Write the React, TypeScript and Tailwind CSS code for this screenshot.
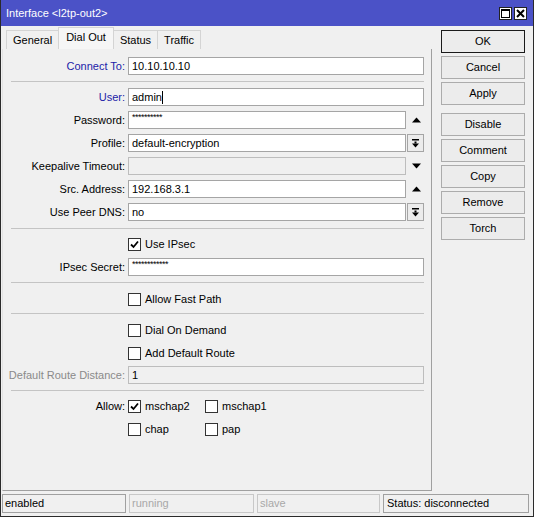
import type { ReactNode } from 'react'

const BLUE = 'text-[#1c1ca8]'

function UpArrow() {
  return (
    <svg width="9" height="6" viewBox="0 0 9 6" className="ml-[6px]">
      <path d="M0 5.5 L4.5 0.5 L9 5.5 Z" fill="#000" />
    </svg>
  )
}

function DownArrow() {
  return (
    <svg width="9" height="6" viewBox="0 0 9 6" className="ml-[6px]">
      <path d="M0 0.5 L4.5 5.5 L9 0.5 Z" fill="#000" />
    </svg>
  )
}

function DropButton() {
  return (
    <div className="ml-[1px] w-[17px] h-[18px] border border-[#a5a5a5] bg-[#ececec] flex items-center justify-center">
      <svg width="9" height="9" viewBox="0 0 9 9">
        <rect x="1" y="0" width="7" height="1.5" fill="#000" />
        <rect x="3.5" y="2.5" width="2" height="2" fill="#000" />
        <path d="M1 4.5 L8 4.5 L4.5 8.5 Z" fill="#000" />
      </svg>
    </div>
  )
}

function Field({
  label,
  value,
  labelClass = '',
  disabled = false,
  small = false,
  trailing,
  className = '',
}: {
  label: string
  value?: ReactNode
  labelClass?: string
  disabled?: boolean
  small?: boolean
  trailing?: ReactNode
  className?: string
}) {
  return (
    <div className={`flex items-center h-[18px] ${className}`}>
      <div className={`w-[125px] shrink-0 text-right pr-[3px] ${labelClass}`}>{label}</div>
      <div
        className={`flex-1 h-[18px] border flex items-center px-[3px] ${
          disabled ? 'bg-[#f0f0f0] border-[#bdbdbd]' : 'bg-white border-[#a5a5a5]'
        } ${small ? 'text-[9px] tracking-[-0.5px] items-start pt-[1px]' : ''}`}
      >
        {value}
      </div>
      {trailing !== undefined && (
        <div className="w-[18px] shrink-0 flex items-center">{trailing}</div>
      )}
    </div>
  )
}

function Check({ checked = false }: { checked?: boolean }) {
  return (
    <div className="w-[13px] h-[13px] shrink-0 border border-[#333] bg-white flex items-center justify-center">
      {checked && (
        <svg width="9" height="9" viewBox="0 0 9 9">
          <path d="M1 4.5 L3.5 7 L8 1.5" stroke="#000" strokeWidth="1.8" fill="none" />
        </svg>
      )}
    </div>
  )
}

function CheckItem({ label, checked = false, className = '' }: { label: string; checked?: boolean; className?: string }) {
  return (
    <div className={`flex items-center ${className}`}>
      <Check checked={checked} />
      <span className="ml-[4px]">{label}</span>
    </div>
  )
}

function CheckRow({ children, label = '', className = '' }: { children: ReactNode; label?: string; className?: string }) {
  return (
    <div className={`flex items-center h-[18px] ${className}`}>
      <div className="w-[125px] shrink-0 text-right pr-[3px]">{label}</div>
      {children}
    </div>
  )
}

function Sep({ className = '' }: { className?: string }) {
  return <div className={`h-px bg-[#c4c4c4] ml-[8px] ${className}`} />
}

function Button({ children, primary = false, className = '' }: { children: ReactNode; primary?: boolean; className?: string }) {
  return (
    <div
      className={`w-[84px] h-[23px] flex items-center justify-center bg-[#ececec] border ${
        primary ? 'border-[#1a1a1a]' : 'border-[#acacac]'
      } ${className}`}
    >
      {children}
    </div>
  )
}

export default function App() {
  return (
    <div className="w-[534px] h-[517px] bg-[#f0f0f0] border-x border-b border-[#2b2b2b] flex flex-col text-[11px] leading-none text-black font-['Liberation_Sans',Arial,sans-serif]">
      {/* Title bar */}
      <div className="h-[26px] shrink-0 bg-[#4b52c7] flex items-center pl-[5px] pr-[6px] text-white">
        <span>{'Interface <l2tp-out2>'}</span>
        <div className="ml-auto flex gap-[2px] mt-[1px]">
          <div className="w-[13px] h-[13px] bg-white border border-[#222] flex items-center justify-center">
            <svg width="9" height="9" viewBox="0 0 9 9">
              <rect x="0.5" y="0.5" width="8" height="8" fill="none" stroke="#000" />
              <rect x="0" y="0" width="9" height="2" fill="#000" />
            </svg>
          </div>
          <div className="w-[13px] h-[13px] bg-white border border-[#222] flex items-center justify-center">
            <svg width="9" height="9" viewBox="0 0 9 9">
              <path d="M1 1 L8 8 M8 1 L1 8" stroke="#000" strokeWidth="2" />
            </svg>
          </div>
        </div>
      </div>

      <div className="flex flex-1 min-h-0">
        {/* Tabs and form */}
        <div className="w-[431px] shrink-0 flex flex-col pl-[1px]">
          <div className="h-[23px] shrink-0 flex items-end pl-[4px]">
            <div className="h-[19px] px-[6px] flex items-center border border-b-0 border-[#d4d4d4] bg-[#f0f0f0]">General</div>
            <div className="h-[22px] px-[7px] flex items-center pb-[2px] border border-b-0 border-[#d4d4d4] bg-[#f6f6f6] -mx-[1px] relative">
              Dial Out
            </div>
            <div className="h-[19px] px-[6px] flex items-center border border-b-0 border-[#d4d4d4] bg-[#f0f0f0]">Status</div>
            <div className="h-[19px] px-[6px] flex items-center border border-b-0 border-l-0 border-[#d4d4d4] bg-[#f0f0f0]">Traffic</div>
          </div>

          <div className="flex-1 border-l border-r border-b border-[#a0a0a0] border-l-[#e3e3e3] pt-[8px] pr-[7px]">
            <Field label="Connect To:" labelClass={BLUE} value="10.10.10.10" />
            <Sep className="mt-[6px]" />
            <Field
              className="mt-[6px]"
              label="User:"
              labelClass={BLUE}
              value={
                <>
                  admin<span className="inline-block w-px h-[13px] bg-black" />
                </>
              }
            />
            <Field className="mt-[5px]" label="Password:" value="**********" small trailing={<UpArrow />} />
            <Field className="mt-[5px]" label="Profile:" value="default-encryption" trailing={<DropButton />} />
            <Field className="mt-[5px]" label="Keepalive Timeout:" disabled trailing={<DownArrow />} />
            <Field className="mt-[5px]" label="Src. Address:" value="192.168.3.1" trailing={<UpArrow />} />
            <Field className="mt-[5px]" label="Use Peer DNS:" value="no" trailing={<DropButton />} />
            <Sep className="mt-[7px]" />
            <CheckRow className="mt-[6px]">
              <CheckItem label="Use IPsec" checked />
            </CheckRow>
            <Field className="mt-[5px]" label="IPsec Secret:" value="************" small />
            <Sep className="mt-[6px]" />
            <CheckRow className="mt-[7px]">
              <CheckItem label="Allow Fast Path" />
            </CheckRow>
            <Sep className="mt-[5px]" />
            <CheckRow className="mt-[7px]">
              <CheckItem label="Dial On Demand" />
            </CheckRow>
            <CheckRow className="mt-[5px]">
              <CheckItem label="Add Default Route" />
            </CheckRow>
            <Field className="mt-[4px]" label="Default Route Distance:" labelClass="text-[#8a8a8a]" value="1" disabled />
            <Sep className="mt-[6px]" />
            <CheckRow className="mt-[6px]" label="Allow:">
              <CheckItem label="mschap2" checked className="w-[77px]" />
              <CheckItem label="mschap1" />
            </CheckRow>
            <CheckRow className="mt-[5px]">
              <CheckItem label="chap" className="w-[77px]" />
              <CheckItem label="pap" />
            </CheckRow>
          </div>
        </div>

        {/* Action buttons */}
        <div className="flex-1 pl-[9px] pt-[4px] flex flex-col gap-[3px]">
          <Button primary>OK</Button>
          <Button>Cancel</Button>
          <Button className="mb-[5px]">Apply</Button>
          <Button>Disable</Button>
          <Button>Comment</Button>
          <Button>Copy</Button>
          <Button>Remove</Button>
          <Button>Torch</Button>
        </div>
      </div>

      {/* Status bar */}
      <div className="h-[25px] shrink-0 flex items-start pt-[3px] pl-[1px] gap-[3px] pr-[4px]">
        <div className="w-[124px] h-[19px] border border-[#a0a0a0] flex items-center px-[2px]">enabled</div>
        <div className="w-[125px] h-[19px] border border-[#c8c8c8] flex items-center px-[2px] text-[#a8a8a8]">running</div>
        <div className="w-[123px] h-[19px] border border-[#c8c8c8] flex items-center px-[2px] text-[#a8a8a8]">slave</div>
        <div className="flex-1 h-[19px] border border-[#a0a0a0] flex items-center px-[3px]">Status: disconnected</div>
      </div>
    </div>
  )
}
